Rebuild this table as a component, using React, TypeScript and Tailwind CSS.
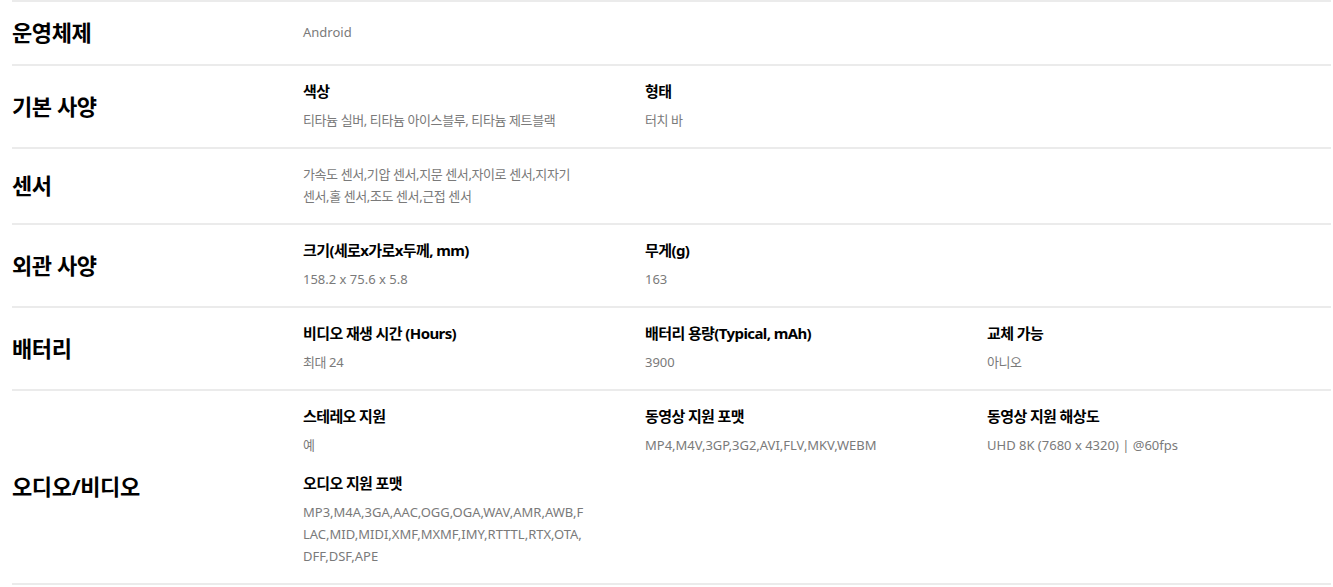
type Spec = { title?: string; value: string; wrap?: "all" | "keep" };

type Section = { label: string; columns: Spec[][] };

const SECTIONS: Section[] = [
  { label: "운영체제", columns: [[{ value: "Android" }]] },
  {
    label: "기본 사양",
    columns: [
      [{ title: "색상", value: "티타늄 실버, 티타늄 아이스블루, 티타늄 제트블랙" }],
      [{ title: "형태", value: "터치 바" }],
    ],
  },
  {
    label: "센서",
    columns: [
      [
        {
          value: "가속도 센서,기압 센서,지문 센서,자이로 센서,지자기 센서,홀 센서,조도 센서,근접 센서",
          wrap: "keep",
        },
      ],
    ],
  },
  {
    label: "외관 사양",
    columns: [
      [{ title: "크기(세로x가로x두께, mm)", value: "158.2 x 75.6 x 5.8" }],
      [{ title: "무게(g)", value: "163" }],
    ],
  },
  {
    label: "배터리",
    columns: [
      [{ title: "비디오 재생 시간 (Hours)", value: "최대 24" }],
      [{ title: "배터리 용량(Typical, mAh)", value: "3900" }],
      [{ title: "교체 가능", value: "아니오" }],
    ],
  },
  {
    label: "오디오/비디오",
    columns: [
      [
        { title: "스테레오 지원", value: "예" },
        {
          title: "오디오 지원 포맷",
          value:
            "MP3,M4A,3GA,AAC,OGG,OGA,WAV,AMR,AWB,FLAC,MID,MIDI,XMF,MXMF,IMY,RTTTL,RTX,OTA,DFF,DSF,APE",
          wrap: "all",
        },
      ],
      [{ title: "동영상 지원 포맷", value: "MP4,M4V,3GP,3G2,AVI,FLV,MKV,WEBM" }],
      [{ title: "동영상 지원 해상도", value: "UHD 8K (7680 x 4320) | @60fps" }],
    ],
  },
];

// latin-only values run a bit wider in the original font
const hasHangul = (s: string) => /[가-힣]/.test(s);

function SpecItem({ spec }: { spec: Spec }) {
  return (
    <div className="w-[281px]">
      {spec.title && (
        <p className="text-[15px] leading-[22px] font-bold tracking-[-0.6px] text-black">{spec.title}</p>
      )}
      <p
        className={
          "text-[13px] leading-[22px] text-[#7a7a7a] " +
          (hasHangul(spec.value) ? "tracking-[-0.4px] " : "tracking-normal ") +
          (spec.title ? "mt-[7px] " : "") +
          (spec.wrap === "all" ? "break-all" : spec.wrap === "keep" ? "break-keep" : "")
        }
      >
        {spec.value}
      </p>
    </div>
  );
}

export default function App() {
  return (
    <main
      className="bg-white min-h-[587px] pl-3 pr-[2px]"
      style={{ fontFamily: '"Noto Sans", "Noto Sans CJK KR", sans-serif' }}
    >
      <div className="border-t-2 border-[#ebebeb]">
        {SECTIONS.map((s) => (
          <section key={s.label} className="flex items-center border-b-2 border-[#ebebeb] pt-[14px] pb-4">
            <h2 className="w-[291px] shrink-0 text-[22px] leading-[32px] font-bold tracking-[-0.4px] text-black">
              {s.label}
            </h2>
            <div className="flex">
              {s.columns.map((col, i) => (
                <div key={i} className="w-[342px] flex flex-col gap-4">
                  {col.map((spec) => (
                    <SpecItem key={spec.value} spec={spec} />
                  ))}
                </div>
              ))}
            </div>
          </section>
        ))}
      </div>
    </main>
  );
}
